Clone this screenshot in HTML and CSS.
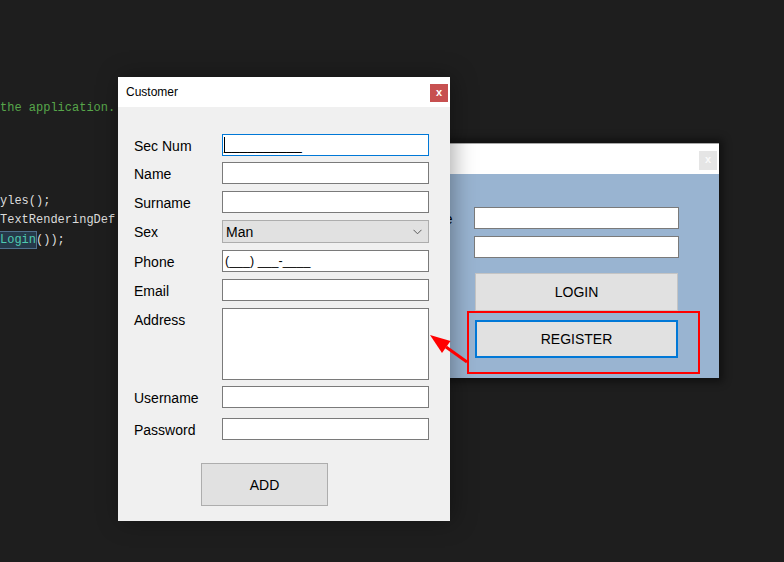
FILE: index.html
```html
<!DOCTYPE html>
<html>
<head>
<meta charset="utf-8">
<link rel="stylesheet" href="styles.css">
</head>
<body>
<div class="desktop">
  <div class="code">
    <div class="ln comment">the application.</div>
    <div class="ln first-after">yles();</div>
    <div class="ln">TextRenderingDef</div>
    <div class="ln"><span class="hl">Login</span>());</div>
  </div>

  <div class="win login">
    <div class="titlebar login-title">
      <span class="title-text"></span>
      <span class="close close-login">x</span>
    </div>
    <div class="login-body">
      <div class="login-grid">
        <label class="lbl">Username</label>
        <div class="field"></div>
        <label class="lbl">Password</label>
        <div class="field"></div>
        <div class="btn login-btn">LOGIN</div>
        <div class="btn register-btn">REGISTER</div>
      </div>
    </div>
  </div>

  <div class="win customer">
    <div class="titlebar">
      <span class="title-text">Customer</span>
      <span class="close close-red">x</span>
    </div>
    <div class="cust-body">
      <div class="cust-grid">
        <label class="lbl">Sec Num</label>
        <div class="field focus"><span class="caret"></span><span class="mask">__________</span></div>
        <label class="lbl">Name</label>
        <div class="field"></div>
        <label class="lbl">Surname</label>
        <div class="field"></div>
        <label class="lbl">Sex</label>
        <div class="combo"><span>Man</span>
          <svg class="chev" width="9" height="6" viewBox="0 0 9 6"><path d="M0.5 0.8 L4.5 4.8 L8.5 0.8" fill="none" stroke="#5a5a5a" stroke-width="1"/></svg>
        </div>
        <label class="lbl">Phone</label>
        <div class="field"><span class="mask phone">(___) ___-____</span></div>
        <label class="lbl">Email</label>
        <div class="field"></div>
        <label class="lbl">Address</label>
        <div class="field area"></div>
        <label class="lbl">Username</label>
        <div class="field"></div>
        <label class="lbl">Password</label>
        <div class="field"></div>
        <div class="btn add-btn">ADD</div>
      </div>
    </div>
  </div>

  <svg class="annot" width="784" height="562" viewBox="0 0 784 562">
    <rect x="468" y="312" width="231" height="61" fill="none" stroke="#ff0000" stroke-width="2"/>
    <line x1="467" y1="362" x2="446" y2="347" stroke="#ff0000" stroke-width="3"/>
    <polygon points="430,335 450.5,341 442,353" fill="#ff0000"/>
  </svg>
</div>
</body>
</html>
```

FILE: styles.css
```css
html, body {
  margin: 0;
  padding: 0;
  background: #1e1e1e;
}

.desktop {
  position: relative;
  width: 784px;
  height: 562px;
  overflow: hidden;
  background: #1e1e1e;
  font-family: "Liberation Sans", Arial, sans-serif;
}

.code {
  padding-top: 99px;
  font-family: "Liberation Mono", "DejaVu Sans Mono", monospace;
  font-size: 12px;
  line-height: 19.5px;
  color: #dcdcdc;
}

.ln {
  white-space: pre;
  height: 19.5px;
}

.ln.comment {
  color: #57a64a;
}

.ln.first-after {
  margin-top: 73px;
}

.hl {
  color: #4ec9b0;
  background: #25394a;
  outline: 1px solid #4f6f8c;
  padding: 1px 0;
}

.win {
  position: absolute;
}

.titlebar {
  background: #ffffff;
  height: 30px;
  display: flex;
  justify-content: space-between;
  align-items: center;
  font-size: 12px;
  color: #000;
}

.title-text {
  padding-left: 8px;
}

.close {
  width: 18px;
  height: 18px;
  margin-right: 2px;
  margin-top: 2px;
  display: flex;
  align-items: center;
  justify-content: center;
  font-size: 11px;
  font-weight: bold;
  color: #ffffff;
  line-height: 1;
  padding-bottom: 2px;
  box-sizing: border-box;
}

.close-red {
  background: #c75050;
}

.close-login {
  background: #e5e5e5;
  color: #fafafa;
  height: 19px;
}

/* Customer window */
.customer {
  left: 118px;
  top: 77px;
  width: 332px;
  height: 444px;
  box-shadow: 3px 0 22px rgba(0, 0, 0, 0.35);
  display: flex;
  flex-direction: column;
}

.cust-body {
  flex: 1;
  background: #f0f0f0;
  padding: 27px 0 0 16px;
}

.cust-grid {
  display: grid;
  grid-template-columns: 88px 207px;
  grid-template-rows: 28px 29px 29px 30px 29px 29px 78px 32px 45px 43px;
  align-items: start;
}

.lbl {
  font-size: 14px;
  line-height: 24px;
  color: #000;
  white-space: nowrap;
}

.field {
  box-sizing: border-box;
  height: 22px;
  background: #ffffff;
  border: 1px solid #7a7a7a;
  display: flex;
  align-items: center;
  padding-left: 1px;
  font-size: 14px;
  color: #000;
}

.field.focus {
  border-color: #0078d7;
}

.field.area {
  height: 72px;
}

.caret {
  display: inline-block;
  width: 1px;
  height: 16px;
  background: #000;
  margin-right: -1px;
  margin-top: -1px;
}

.mask {
  white-space: pre;
  line-height: 20px;
}

.mask.phone {
  font-size: 12.5px;
  padding-left: 1px;
}

.combo {
  box-sizing: border-box;
  height: 23px;
  background: #e1e1e1;
  border: 1px solid #adadad;
  display: flex;
  align-items: center;
  justify-content: space-between;
  padding: 0 6px 0 3px;
  font-size: 14px;
  color: #000;
}

.chev {
  display: block;
}

.btn {
  box-sizing: border-box;
  background: #e1e1e1;
  border: 1px solid #adadad;
  display: flex;
  align-items: center;
  justify-content: center;
  font-size: 14px;
  color: #000;
}

.add-btn {
  grid-column: 1 / -1;
  margin-left: 67px;
  width: 127px;
  height: 43px;
}

/* Login window */
.login {
  left: 300px;
  top: 143px;
  width: 419px;
  height: 235px;
  display: flex;
  flex-direction: column;
  box-shadow: 0 0 8px 4px rgba(0, 0, 0, 0.45);
}

.login-title {
  height: 31px;
  border-top: 1px solid #a8a8a8;
  box-sizing: border-box;
  align-items: flex-start;
}

.login-title .close {
  margin-top: 7px;
}

.login-body {
  flex: 1;
  background: #99b4d1;
  padding: 33px 0 0 88px;
}

.login-grid {
  display: grid;
  grid-template-columns: 86px 205px;
  grid-template-rows: 29px 37px 47px 38px;
  align-items: start;
}

.login-grid .btn {
  grid-column: 1 / -1;
  margin-left: 87px;
  width: 203px;
  height: 38px;
}

.login-btn {
  border-color: #c4c4c4;
}

.register-btn {
  border: 2px solid #0078d7;
}

.annot {
  position: absolute;
  left: 0;
  top: 0;
  pointer-events: none;
}
```
